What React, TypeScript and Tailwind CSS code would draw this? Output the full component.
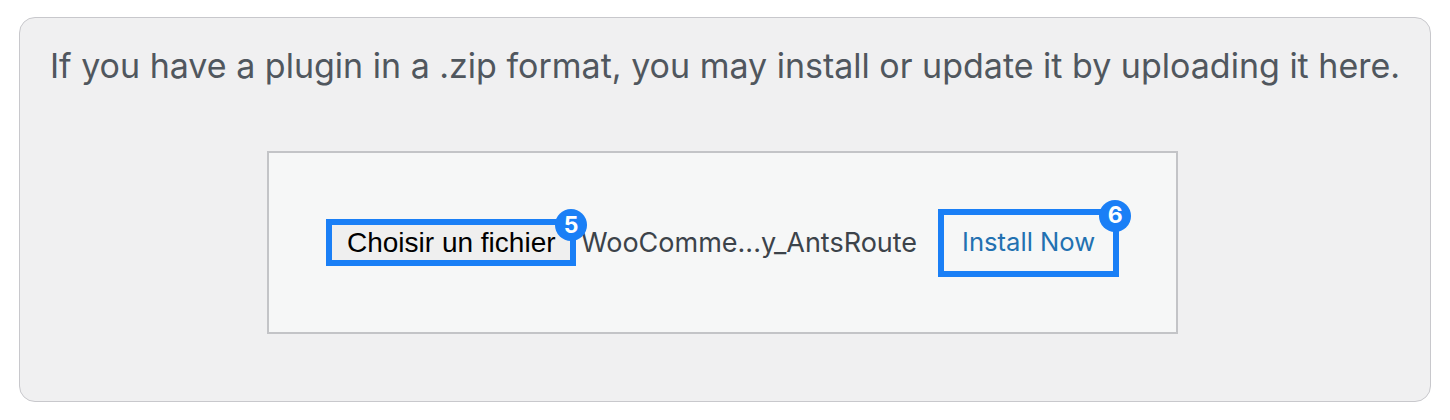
import React from 'react';

const Badge: React.FC<{ n: number; className: string }> = ({ n, className }) => (
  <span
    className={`absolute flex h-[32px] w-[32px] items-center justify-center rounded-full bg-[#1a7ff6] text-[23px] font-bold leading-none text-white font-['Inter',sans-serif] ${className}`}
  >
    {n}
  </span>
);

export default function App() {
  return (
    <div className="min-h-[420px] bg-white pl-[19px] pr-[19px] pt-[17px] font-['Liberation_Sans',Arial,sans-serif]">
      <div className="flex h-[385px] w-[1412px] flex-col rounded-[16px] border border-[#c8c8cc] bg-[#f0f0f1]">
        {/* Upload description */}
        <p className="mt-[28px] self-center whitespace-nowrap text-[34px] leading-[40px] text-[#50575e] font-['Inter',sans-serif]">
          If you have a plugin in a .zip format, you may install or update it by uploading it here.
        </p>

        {/* Upload form */}
        <div className="ml-[247px] mt-[65px] flex h-[183px] w-[911px] items-center border-2 border-[#c3c4c7] bg-[#f6f7f7] pl-[57px]">
          <div className="flex items-center">
            <div className="relative border-[6px] border-[#1a7ff6]">
              <button className="block h-[35px] w-[238px] bg-[#efefef] text-left text-[28px] leading-[35px] text-black">
                <span className="pl-[15px]">Choisir un fichier</span>
              </button>
              <Badge n={5} className="right-[-17px] top-[-16px]" />
            </div>
            <span className="ml-[5px] text-[27px] leading-[35px] text-[#3c434a] font-['Inter',sans-serif]">
              WooComme...y_AntsRoute
            </span>
            <div className="relative ml-[21px] border-[6px] border-[#1a7ff6]">
              <button className="flex h-[56px] w-[169px] items-center justify-center bg-[#f6f7f7] text-[25.6px] text-[#2271b1] font-['Inter',sans-serif]">
                Install Now
              </button>
              <Badge n={6} className="right-[-18px] top-[-15px]" />
            </div>
          </div>
        </div>
      </div>
    </div>
  );
}
